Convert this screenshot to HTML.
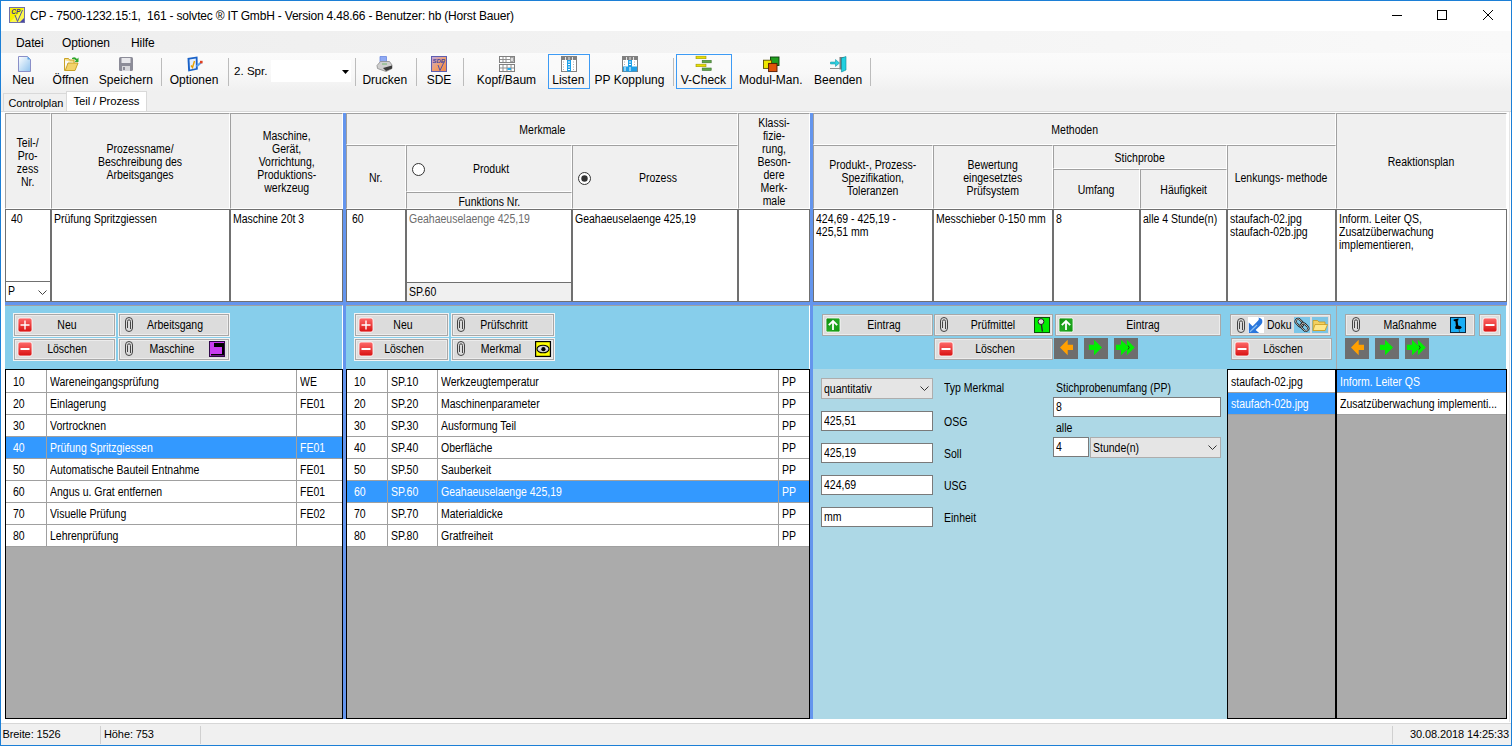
<!DOCTYPE html><html><head><meta charset="utf-8"><style>
*{margin:0;padding:0;box-sizing:border-box}
html,body{width:1512px;height:746px;overflow:hidden;background:#f0f0f0;font-family:"Liberation Sans",sans-serif;color:#000}
div{position:absolute}
.t{white-space:nowrap;font-size:12px;letter-spacing:0;line-height:13px;transform:scaleX(0.875);transform-origin:0 0}
.tc{transform-origin:50% 0}
.tu{white-space:nowrap;font-size:11px;line-height:13px}
.sx{display:inline-block;white-space:nowrap;transform:scaleX(0.875);transform-origin:50% 50%}
.sxl{display:inline-block;white-space:nowrap;transform:scaleX(0.875);transform-origin:0 0}
.tb{white-space:nowrap;font-size:12px;line-height:14px}
.h{background:#f0f0f0;border-top:1px solid #a0a0a0;border-left:1px solid #a0a0a0;border-right:1px solid #fff;border-bottom:1px solid #fff;font-size:12px;letter-spacing:0;line-height:13px;display:flex;align-items:center;justify-content:center;text-align:center;padding-top:3.5px}
.d{background:#fff;border:1px solid #707070;font-size:12px;letter-spacing:0;line-height:13px;padding:2px 0 0 2px}
.btn{background:#e1e1e1;border:1px solid #c8c8c8}
svg{position:absolute;overflow:visible}
</style></head><body>
<div style="left:0px;top:0px;width:1512px;height:31px;background:#fff"></div>
<svg style="left:9px;top:7px" width="16" height="16" viewBox="0 0 16 16"><rect x="0.5" y="0.5" width="15" height="15" fill="#f6f200" stroke="#7070a8"/>
<path d="M1 15 L15 1 L15 15 Z" fill="#fffb9a" opacity="0.5"/>
<text x="2.2" y="7" font-size="6.5" font-family="Liberation Sans" font-weight="bold" font-style="italic" fill="#3b3b8a">CP</text>
<path d="M6 8 L8.5 14.5 L13.5 3" fill="none" stroke="#5050a0" stroke-width="1"/>
<path d="M11 15 L15 11 L15 15 Z" fill="#4848a8"/></svg>
<div class="tu" style="left:30px;top:8.6px;font-size:12px;letter-spacing:-0.19px;line-height:14px">CP - 7500-1232.15:1,&nbsp; 161 - solvtec ® IT GmbH - Version 4.48.66 - Benutzer: hb (Horst Bauer)</div>
<div style="left:1392px;top:15px;width:10px;height:1px;background:#000"></div>
<div style="left:1437px;top:10px;width:10px;height:10px;border:1px solid #000"></div>
<svg style="left:1483px;top:10px" width="10" height="10" viewBox="0 0 10 10"><path d="M0 0 L10 10 M10 0 L0 10" stroke="#000" stroke-width="1"/></svg>
<div style="left:1px;top:31px;width:1510px;height:22px;background:linear-gradient(to right,#eeeeee,#f1f1f1 30%,#f9f9f9)"></div>
<div class="tu" style="left:16px;top:35.6px;font-size:12px;letter-spacing:-0.1px;line-height:14px">Datei</div>
<div class="tu" style="left:62px;top:35.6px;font-size:12px;letter-spacing:-0.1px;line-height:14px">Optionen</div>
<div class="tu" style="left:131px;top:35.6px;font-size:12px;letter-spacing:-0.1px;line-height:14px">Hilfe</div>
<div style="left:1px;top:53px;width:1510px;height:38px;background:linear-gradient(#fbfbfb,#f8f8f8 55%,#f0f0f0)"></div>
<svg width="0" height="0" style="position:absolute"><defs>
<linearGradient id="gdoc" x1="0" y1="0" x2="1" y2="1"><stop offset="0" stop-color="#fff"/><stop offset="1" stop-color="#8fc2ee"/></linearGradient>
<linearGradient id="gsde" x1="0" y1="0" x2="1" y2="1"><stop offset="0" stop-color="#b8a8e8"/><stop offset="0.5" stop-color="#f0a070"/><stop offset="1" stop-color="#f08848"/></linearGradient>
<linearGradient id="gred" x1="0" y1="0" x2="0" y2="1"><stop offset="0" stop-color="#ff6a6a"/><stop offset="1" stop-color="#d81010"/></linearGradient>
<linearGradient id="ggreen" x1="0" y1="0" x2="1" y2="1"><stop offset="0" stop-color="#0a8a0a"/><stop offset="0.5" stop-color="#22a822"/><stop offset="1" stop-color="#0c960c"/></linearGradient>
</defs></svg>
<div style="left:548px;top:54px;width:42px;height:35px;border:1px solid #3d9bf5;background:rgba(255,255,255,0.15)"></div>
<div style="left:676px;top:54px;width:56px;height:35px;border:1px solid #3d9bf5;background:rgba(255,255,255,0.15)"></div>
<div class="tb" style="left:-7.4px;width:61.1px;text-align:center;top:73.3px">Neu</div>
<svg style="left:18px;top:56px" width="16" height="16" viewBox="0 0 16 16"><path d="M0.5 0.5 H9.5 L12.5 3.5 V15.5 H0.5 Z" fill="url(#gdoc)" stroke="#8a8fc8"/><path d="M9.5 0.5 V3.5 H12.5 Z" fill="#5aa8e8"/></svg>
<div class="tb" style="left:32.6px;width:75.80000000000001px;text-align:center;top:73.3px">Öffnen</div>
<svg style="left:64px;top:56px" width="16" height="16" viewBox="0 0 16 16"><path d="M0.5 4 L0.5 14.5 L11 14.5 L14 7 L4 7 L1.5 14" fill="#f3d36a" stroke="#c9a227"/><path d="M0.5 4 L0.5 2.5 L4.5 2.5 L5.5 4 L10 4 L10 7" fill="#f7e08c" stroke="#c9a227"/><path d="M8 2 Q11 0 13 3 L14.5 1.5 L14.5 6 L10.5 6 L12 4.5 Q10.5 2.5 8 3Z" fill="#2ea82e"/></svg>
<div class="tb" style="left:80.3px;width:91.2px;text-align:center;top:73.3px">Speichern</div>
<svg style="left:118px;top:56px" width="16" height="16" viewBox="0 0 16 16"><rect x="1" y="1" width="14" height="14" rx="1.5" fill="#8c8c98"/><rect x="3.5" y="2" width="9" height="5" fill="#e8e8ec"/><rect x="4" y="10" width="8" height="5" fill="#d8d8dc"/><rect x="5" y="11" width="2" height="3" fill="#8c8c98"/></svg>
<div class="tb" style="left:149.5px;width:89.0px;text-align:center;top:73.3px">Optionen</div>
<svg style="left:187px;top:56px" width="16" height="16" viewBox="0 0 16 16"><path d="M0.5 2 L10.5 0.5 L10.8 13.5 L1.2 15.5 Z" fill="#1a62c8"/><path d="M2.5 3.6 L8.8 2.6 L8.9 12.2 L3 13.4 Z" fill="#e4f0ff"/><path d="M4 9.5 L5.5 11.5 L7.5 5" fill="none" stroke="#e8a000" stroke-width="1.4"/><path d="M9.5 10.5 L14 6.5" stroke="#5aa0ee" stroke-width="2.2"/><rect x="13" y="4.8" width="2.6" height="2.6" fill="#e04020"/></svg>
<div class="tb" style="left:343px;width:83.60000000000002px;text-align:center;top:73.3px">Drucken</div>
<svg style="left:377px;top:56px" width="16" height="16" viewBox="0 0 16 16"><path d="M3 0.5 H9.5 V6.5 H3 Z" fill="#90aaf4" stroke="#6a88e0" stroke-width="0.8"/><path d="M0 9.5 L3.5 5.5 H12.5 L15 9 V12.5 L9 15.5 L0.5 12.5 Z" fill="#cfcfcf" stroke="#8a8a8a" stroke-width="0.8"/><path d="M6 12 L15 9.5 V12.5 L9 15 Z" fill="#3a3a3a"/><path d="M5 8 H10" stroke="#5ab05a" stroke-width="0.8"/></svg>
<div class="tb" style="left:409px;width:60px;text-align:center;top:73.3px">SDE</div>
<svg style="left:431px;top:56px" width="16" height="16" viewBox="0 0 16 16"><rect x="0.5" y="0.5" width="15" height="15" fill="url(#gsde)" stroke="#5e5eb0"/><text x="1.5" y="7" font-size="6" font-family="Liberation Sans" font-style="italic" font-weight="bold" fill="#4646a0">SDE</text><path d="M7 9 L9 14.5 L14 4" fill="none" stroke="#5050a8" stroke-width="1"/></svg>
<div class="tb" style="left:456.3px;width:100.19999999999999px;text-align:center;top:73.3px">Kopf/Baum</div>
<svg style="left:499px;top:56px" width="16" height="16" viewBox="0 0 16 16"><rect x="0.5" y="0.5" width="15" height="6" fill="#fff" stroke="#808080"/><rect x="0.5" y="8.5" width="15" height="7" fill="#fff" stroke="#808080"/><path d="M1 3.5 H11 M4 1 V6 M7 1 V6 M1 12 H15 M4 9 V15 M8 9 V15 M12 9 V15" stroke="#909090"/><rect x="8.5" y="12" width="3.5" height="2" fill="#22a8e8"/><rect x="11.5" y="1.5" width="3" height="4" fill="#ddd" stroke="#888" stroke-width="0.7"/></svg>
<div class="tb" style="left:533px;width:70.60000000000002px;text-align:center;top:73.3px">Listen</div>
<svg style="left:561px;top:56px" width="16" height="16" viewBox="0 0 16 16"><rect x="0.5" y="0.5" width="15" height="15" fill="#fff" stroke="#808080"/><rect x="1" y="1" width="14" height="3" fill="#808080"/><path d="M4.5 1 V4 M8 1 V4 M11.5 1 V4" stroke="#fff" stroke-width="0.8"/><rect x="6" y="4" width="4" height="11.5" fill="#1ea0e8"/><path d="M2 6 H4 M2 8.5 H4 M2 11 H4 M2 13.5 H4 M12 6 H14 M12 8.5 H14 M12 11 H14 M12 13.5 H14" stroke="#b0b0b0" stroke-dasharray="1 1"/><path d="M7 6 H9 M7 8.5 H9 M7 11 H9 M7 13.5 H9" stroke="#fff"/></svg>
<div class="tb" style="left:575.3px;width:108.40000000000009px;text-align:center;top:73.3px">PP Kopplung</div>
<svg style="left:622px;top:56px" width="16" height="16" viewBox="0 0 16 16"><rect x="0.5" y="0.5" width="15" height="15" fill="#fff" stroke="#808080"/><rect x="1" y="1" width="14" height="3" fill="#808080"/><path d="M4.5 1 V4 M8 1 V4 M11.5 1 V4" stroke="#fff" stroke-width="0.8"/><rect x="6" y="4" width="4" height="11.5" fill="#1ea0e8"/><rect x="1" y="10.5" width="14" height="5" fill="#1ea0e8"/><path d="M2 6 H4 M2 8.5 H4 M12 6 H14 M12 8.5 H14" stroke="#b0b0b0" stroke-dasharray="1 1"/><path d="M7 6 H9 M7 8.5 H9 M2 12 H4 M2 14 H4 M7 12 H9 M7 14 H9" stroke="#fff"/></svg>
<div class="tb" style="left:661px;width:84.79999999999995px;text-align:center;top:73.3px">V-Check</div>
<svg style="left:696px;top:56px" width="16" height="16" viewBox="0 0 16 16"><rect x="0" y="0.2" width="10" height="2.5" fill="#e8e000" stroke="#a09800" stroke-width="0.6"/><rect x="6.2" y="4.3" width="9" height="2.5" fill="#5ea848" stroke="#3c7030" stroke-width="0.6"/><rect x="0" y="8.2" width="10" height="2.5" fill="#e8e000" stroke="#a09800" stroke-width="0.6"/><rect x="6.2" y="12" width="9" height="2.5" fill="#5ea848" stroke="#3c7030" stroke-width="0.6"/></svg>
<div class="tb" style="left:717.6px;width:106.39999999999998px;text-align:center;top:73.3px">Modul-Man.</div>
<svg style="left:763px;top:56px" width="16" height="16" viewBox="0 0 16 16"><rect x="7.5" y="1" width="8.5" height="8.5" fill="#20a020" stroke="#0c400c" stroke-width="0.9"/><rect x="0.5" y="4.2" width="8" height="8.2" fill="#f0e800" stroke="#5a5000" stroke-width="0.9"/><rect x="5.6" y="7.4" width="8.4" height="8.2" fill="#e05408" stroke="#501800" stroke-width="0.9"/></svg>
<div class="tb" style="left:795.8px;width:84.70000000000005px;text-align:center;top:73.3px">Beenden</div>
<svg style="left:830px;top:56px" width="16" height="16" viewBox="0 0 16 16"><path d="M9.5 1 H15 V13.5 H9.5 Z" fill="#7a7a7a"/><path d="M11.5 2 L16 0.5 V14 L11.5 16 Z" fill="#20d0e0" stroke="#0a8898" stroke-width="0.6"/><path d="M0.5 6 H5.5 V3.5 L9.5 7 L5.5 10.5 V8 H0.5 Z" fill="#30d0e0" stroke="#0a8898" stroke-width="0.5"/><path d="M0 12.5 H10" stroke="#909090" stroke-width="1"/></svg>
<div style="left:161px;top:58px;width:1px;height:28px;background:#bcbcbc"></div>
<div style="left:228px;top:58px;width:1px;height:28px;background:#bcbcbc"></div>
<div style="left:355px;top:58px;width:1px;height:28px;background:#bcbcbc"></div>
<div style="left:416px;top:58px;width:1px;height:28px;background:#bcbcbc"></div>
<div style="left:463px;top:58px;width:1px;height:28px;background:#bcbcbc"></div>
<div style="left:673px;top:58px;width:1px;height:28px;background:#bcbcbc"></div>
<div style="left:870px;top:58px;width:1px;height:28px;background:#bcbcbc"></div>
<div class="tu" style="left:234px;top:64px;font-size:11.6px;letter-spacing:0;line-height:14px">2. Spr.</div>
<div style="left:271px;top:60px;width:80px;height:22px;background:#fff"></div>
<svg style="left:342px;top:70px" width="7" height="4" viewBox="0 0 7 4"><path d="M0 0 H7 L3.5 4 Z" fill="#000"/></svg>
<div style="left:1px;top:91px;width:1510px;height:21px;background:#f0f0f0"></div>
<div style="left:3px;top:93px;width:64px;height:19px;background:#f0f0f0;border:1px solid #d9d9d9;border-bottom:none"></div>
<div style="left:66px;top:91px;width:81px;height:21px;background:#fff;border:1px solid #d9d9d9;border-bottom:none"></div>
<div class="tu" style="left:8.5px;top:96.5px;font-size:10.9px;letter-spacing:-0.1px">Controlplan</div>
<div class="tu" style="left:73.5px;top:94.5px;font-size:11.3px;letter-spacing:-0.1px">Teil / Prozess</div>
<div style="left:1px;top:111px;width:1510px;height:612px;background:#fff;border-top:1px solid #d9d9d9"></div>
<div class="h" style="left:5px;top:113px;width:46px;height:96px;"><span class="sx">Teil-/<br>Pro-<br>zess<br>Nr.</span></div>
<div class="h" style="left:51px;top:113px;width:179px;height:96px;"><span class="sx">Prozessname/<br>Beschreibung des<br>Arbeitsganges</span></div>
<div class="h" style="left:230px;top:113px;width:113px;height:96px;"><span class="sx">Maschine,<br>Gerät,<br>Vorrichtung,<br>Produktions-<br>werkzeug</span></div>
<div class="h" style="left:346px;top:113px;width:392px;height:32px;"><span class="sx">Merkmale</span></div>
<div class="h" style="left:346px;top:145px;width:60px;height:64px;"><span class="sx">Nr.</span></div>
<div class="h" style="left:406px;top:145px;width:166px;height:47px;"></div>
<div class="h" style="left:406px;top:192px;width:166px;height:17px;"><span class="sx">Funktions Nr.</span></div>
<div class="h" style="left:572px;top:145px;width:166px;height:64px;"></div>
<div class="h" style="left:738px;top:113px;width:72px;height:96px;"><span class="sx">Klassi-<br>fizie-<br>rung,<br>Beson-<br>dere<br>Merk-<br>male</span></div>
<div class="h" style="left:813px;top:113px;width:523px;height:32px;"><span class="sx">Methoden</span></div>
<div class="h" style="left:813px;top:145px;width:120px;height:64px;"><span class="sx">Produkt-, Prozess-<br>Spezifikation,<br>Toleranzen</span></div>
<div class="h" style="left:933px;top:145px;width:120px;height:64px;"><span class="sx">Bewertung<br>eingesetztes<br>Prüfsystem</span></div>
<div class="h" style="left:1053px;top:145px;width:174px;height:24px;"><span class="sx">Stichprobe</span></div>
<div class="h" style="left:1053px;top:169px;width:87px;height:40px;"><span class="sx">Umfang</span></div>
<div class="h" style="left:1140px;top:169px;width:87px;height:40px;"><span class="sx">Häufigkeit</span></div>
<div class="h" style="left:1227px;top:145px;width:109px;height:64px;"><span class="sx">Lenkungs- methode</span></div>
<div class="h" style="left:1336px;top:113px;width:171px;height:96px;"><span class="sx">Reaktionsplan</span></div>
<svg style="left:412px;top:163px" width="13" height="13" viewBox="0 0 13 13"><circle cx="6.5" cy="6.5" r="6" fill="#fff" stroke="#333"/></svg>
<div class="t" style="left:473px;top:163px;">Produkt</div>
<svg style="left:578px;top:172px" width="13" height="13" viewBox="0 0 13 13"><circle cx="6.5" cy="6.5" r="6" fill="#fff" stroke="#333"/><circle cx="6.5" cy="6.5" r="3.2" fill="#333"/></svg>
<div class="t" style="left:639px;top:172px;">Prozess</div>
<div class="d" style="left:5px;top:209px;width:46px;height:73px;padding-left:5px;padding-top:3px"><span class="sxl">40</span></div>
<div style="left:5px;top:282px;width:46px;height:20px;background:#fff;border:1px solid #707070;border-top:none"></div>
<div class="t" style="left:8px;top:284.6px;">P</div>
<svg style="left:38px;top:289.5px" width="9" height="5" viewBox="0 0 9 5"><path d="M0.5 0.5 L4.5 4.5 L8.5 0.5" fill="none" stroke="#444" stroke-width="1"/></svg>
<div class="d" style="left:51px;top:209px;width:179px;height:93px;padding-top:3px"><span class="sxl">Prüfung Spritzgiessen</span></div>
<div class="d" style="left:230px;top:209px;width:113px;height:93px;padding-top:3px"><span class="sxl">Maschine 20t 3</span></div>
<div class="d" style="left:346px;top:209px;width:60px;height:93px;padding-left:5px;padding-top:3px"><span class="sxl">60</span></div>
<div class="d" style="left:406px;top:209px;width:166px;height:93px;padding-top:3px;color:#6d6d6d"><span class="sxl">Geahaeuselaenge 425,19</span></div>
<div style="left:406px;top:282px;width:166px;height:20px;background:#f0f0f0;border:1px solid #707070"></div>
<div class="t" style="left:409px;top:286px;">SP.60</div>
<div class="d" style="left:572px;top:209px;width:166px;height:93px;padding-top:3px"><span class="sxl">Geahaeuselaenge 425,19</span></div>
<div class="d" style="left:738px;top:209px;width:72px;height:93px;"></div>
<div class="d" style="left:813px;top:209px;width:120px;height:93px;padding-top:3px"><span class="sxl">424,69 - 425,19 -<br>425,51 mm</span></div>
<div class="d" style="left:933px;top:209px;width:120px;height:93px;padding-top:3px"><span class="sxl">Messchieber 0-150 mm</span></div>
<div class="d" style="left:1053px;top:209px;width:87px;height:93px;padding-top:3px"><span class="sxl">8</span></div>
<div class="d" style="left:1140px;top:209px;width:87px;height:93px;padding-top:3px"><span class="sxl">alle 4 Stunde(n)</span></div>
<div class="d" style="left:1227px;top:209px;width:109px;height:93px;padding-top:3px"><span class="sxl">staufach-02.jpg<br>staufach-02b.jpg</span></div>
<div class="d" style="left:1336px;top:209px;width:171px;height:93px;padding-top:3px"><span class="sxl">Inform. Leiter QS,<br>Zusatzüberwachung<br>implementieren,</span></div>
<div style="left:343px;top:113px;width:3px;height:606px;background:#6495ed"></div>
<div style="left:810px;top:113px;width:3px;height:606px;background:#6495ed"></div>
<div style="left:5px;top:302px;width:1502px;height:3px;background:#6495ed"></div>
<div style="left:5px;top:305px;width:338px;height:64px;background:#87ceeb;border-top:1px solid #a0a0a0;border-right:1px solid #fff"></div>
<div style="left:346px;top:305px;width:464px;height:64px;background:#87ceeb;border-top:1px solid #a0a0a0;border-right:1px solid #fff"></div>
<div style="left:813px;top:305px;width:523px;height:64px;background:#87ceeb;border-top:1px solid #a0a0a0"></div>
<div style="left:813px;top:369px;width:414px;height:350px;background:#add8e6"></div>
<div style="left:1336px;top:305px;width:171px;height:64px;background:#87ceeb;border-top:1px solid #a0a0a0;border-left:1px solid #a8a8a8;border-right:1px solid #fff"></div>
<div style="left:13px;top:313px;width:103px;height:24px;background:#dcdcdc;border:1px solid #f4f4f4;box-shadow:inset 0 0 0 1px #a8a8a8,inset 0 0 0 2px #ececec"></div>
<div class="t tc" style="left:-83px;width:300px;text-align:center;top:319px;">Neu</div>
<svg style="left:18px;top:318px" width="14" height="14" viewBox="0 0 14 14"><rect x="0" y="0" width="14" height="14" rx="2" fill="url(#gred)" stroke="#fff" stroke-width="0.8"/><path d="M7 2.5 V11.5 M2.5 7 H11.5" stroke="#fff" stroke-width="1.4"/></svg>
<div style="left:13px;top:338px;width:103px;height:23px;background:#dcdcdc;border:1px solid #f4f4f4;box-shadow:inset 0 0 0 1px #a8a8a8,inset 0 0 0 2px #ececec"></div>
<div class="t tc" style="left:-83px;width:300px;text-align:center;top:342.6px;">Löschen</div>
<svg style="left:18px;top:342px" width="14" height="14" viewBox="0 0 14 14"><rect x="0" y="0" width="14" height="14" rx="2" fill="url(#gred)" stroke="#fff" stroke-width="0.8"/><path d="M2.5 7 H11.5" stroke="#fff" stroke-width="2"/></svg>
<div style="left:118px;top:313px;width:112px;height:24px;background:#dcdcdc;border:1px solid #f4f4f4;box-shadow:inset 0 0 0 1px #a8a8a8,inset 0 0 0 2px #ececec"></div>
<div class="t tc" style="left:25px;width:300px;text-align:center;top:319px;">Arbeitsgang</div>
<svg style="left:125px;top:317px" width="8" height="15" viewBox="0 0 8 15"><rect x="0.5" y="0.5" width="7" height="14" rx="3.5" fill="none" stroke="#444" stroke-width="1"/><path d="M2.5 11 V4.5 Q2.5 2.8 4 2.8 Q5.5 2.8 5.5 4.5 V12" fill="none" stroke="#444" stroke-width="1"/></svg>
<div style="left:118px;top:338px;width:112px;height:23px;background:#dcdcdc;border:1px solid #f4f4f4;box-shadow:inset 0 0 0 1px #a8a8a8,inset 0 0 0 2px #ececec"></div>
<div class="t tc" style="left:22px;width:300px;text-align:center;top:342.6px;">Maschine</div>
<svg style="left:125px;top:341px" width="8" height="15" viewBox="0 0 8 15"><rect x="0.5" y="0.5" width="7" height="14" rx="3.5" fill="none" stroke="#444" stroke-width="1"/><path d="M2.5 11 V4.5 Q2.5 2.8 4 2.8 Q5.5 2.8 5.5 4.5 V12" fill="none" stroke="#444" stroke-width="1"/></svg>
<svg style="left:209px;top:341px" width="16" height="16" viewBox="0 0 16 16"><rect x="0.5" y="0.5" width="15" height="15" fill="#c83cf0" stroke="#30084a"/><path d="M5 2 H15 V14 H13 V6 H5 Z" fill="#000"/><path d="M2 13 H15 V14.5 H2 Z" fill="#000"/></svg>
<div style="left:354px;top:313px;width:95px;height:24px;background:#dcdcdc;border:1px solid #f4f4f4;box-shadow:inset 0 0 0 1px #a8a8a8,inset 0 0 0 2px #ececec"></div>
<div class="t tc" style="left:253px;width:300px;text-align:center;top:319px;">Neu</div>
<svg style="left:359px;top:318px" width="14" height="14" viewBox="0 0 14 14"><rect x="0" y="0" width="14" height="14" rx="2" fill="url(#gred)" stroke="#fff" stroke-width="0.8"/><path d="M7 2.5 V11.5 M2.5 7 H11.5" stroke="#fff" stroke-width="1.4"/></svg>
<div style="left:354px;top:338px;width:95px;height:23px;background:#dcdcdc;border:1px solid #f4f4f4;box-shadow:inset 0 0 0 1px #a8a8a8,inset 0 0 0 2px #ececec"></div>
<div class="t tc" style="left:254.3px;width:300px;text-align:center;top:342.6px;">Löschen</div>
<svg style="left:359px;top:342px" width="14" height="14" viewBox="0 0 14 14"><rect x="0" y="0" width="14" height="14" rx="2" fill="url(#gred)" stroke="#fff" stroke-width="0.8"/><path d="M2.5 7 H11.5" stroke="#fff" stroke-width="2"/></svg>
<div style="left:451px;top:313px;width:104px;height:24px;background:#dcdcdc;border:1px solid #f4f4f4;box-shadow:inset 0 0 0 1px #a8a8a8,inset 0 0 0 2px #ececec"></div>
<div class="t tc" style="left:354px;width:300px;text-align:center;top:319px;">Prüfschritt</div>
<svg style="left:457px;top:317px" width="8" height="15" viewBox="0 0 8 15"><rect x="0.5" y="0.5" width="7" height="14" rx="3.5" fill="none" stroke="#444" stroke-width="1"/><path d="M2.5 11 V4.5 Q2.5 2.8 4 2.8 Q5.5 2.8 5.5 4.5 V12" fill="none" stroke="#444" stroke-width="1"/></svg>
<div style="left:451px;top:338px;width:104px;height:23px;background:#dcdcdc;border:1px solid #f4f4f4;box-shadow:inset 0 0 0 1px #a8a8a8,inset 0 0 0 2px #ececec"></div>
<div class="t tc" style="left:351px;width:300px;text-align:center;top:342.6px;">Merkmal</div>
<svg style="left:457px;top:341px" width="8" height="15" viewBox="0 0 8 15"><rect x="0.5" y="0.5" width="7" height="14" rx="3.5" fill="none" stroke="#444" stroke-width="1"/><path d="M2.5 11 V4.5 Q2.5 2.8 4 2.8 Q5.5 2.8 5.5 4.5 V12" fill="none" stroke="#444" stroke-width="1"/></svg>
<svg style="left:535px;top:341px" width="16" height="16" viewBox="0 0 16 16"><rect x="0.6" y="0.6" width="14.8" height="14.8" fill="#ffff00" stroke="#000" stroke-width="1.2"/><ellipse cx="8" cy="8" rx="6" ry="3.8" fill="#d0d0d0" stroke="#000" stroke-width="1.1"/><circle cx="8.4" cy="8.2" r="2.1" fill="#000"/><path d="M3.5 8 L5.5 6.5 M12.5 8 L11 6.5" stroke="#fff" stroke-width="0.8"/></svg>
<div style="left:822px;top:314px;width:111px;height:22px;background:#dcdcdc;border:1px solid #a8a8a8;box-shadow:inset 0 0 0 1px #ececec"></div>
<div class="t tc" style="left:734.3px;width:300px;text-align:center;top:319px;">Eintrag</div>
<svg style="left:826px;top:318px" width="14" height="14" viewBox="0 0 14 14"><rect x="0" y="0" width="14" height="14" rx="1.5" fill="url(#ggreen)" stroke="#fff" stroke-width="0.8"/><path d="M7 12 V3 M2.8 7.2 L7 3 L11.2 7.2" fill="none" stroke="#fff" stroke-width="1.8"/></svg>
<div style="left:934px;top:314px;width:119px;height:22px;background:#dcdcdc;border:1px solid #a8a8a8;box-shadow:inset 0 0 0 1px #ececec"></div>
<div class="t tc" style="left:842.5px;width:300px;text-align:center;top:319px;">Prüfmittel</div>
<svg style="left:940px;top:317px" width="8" height="15" viewBox="0 0 8 15"><rect x="0.5" y="0.5" width="7" height="14" rx="3.5" fill="none" stroke="#444" stroke-width="1"/><path d="M2.5 11 V4.5 Q2.5 2.8 4 2.8 Q5.5 2.8 5.5 4.5 V12" fill="none" stroke="#444" stroke-width="1"/></svg>
<svg style="left:1034px;top:317px" width="16" height="16" viewBox="0 0 16 16"><rect x="0.5" y="0.5" width="15" height="15" fill="#00ee00" stroke="#0a500a" stroke-width="1"/><circle cx="7" cy="4.6" r="2.9" fill="#d8d8d8" stroke="#2a1a2a" stroke-width="1"/><path d="M7.4 7.5 L8.4 14.5" stroke="#2a1a2a" stroke-width="1.3"/></svg>
<div style="left:1055px;top:314px;width:166px;height:22px;background:#dcdcdc;border:1px solid #a8a8a8;box-shadow:inset 0 0 0 1px #ececec"></div>
<div class="t tc" style="left:993.4000000000001px;width:300px;text-align:center;top:319px;">Eintrag</div>
<svg style="left:1059px;top:318px" width="14" height="14" viewBox="0 0 14 14"><rect x="0" y="0" width="14" height="14" rx="1.5" fill="url(#ggreen)" stroke="#fff" stroke-width="0.8"/><path d="M7 12 V3 M2.8 7.2 L7 3 L11.2 7.2" fill="none" stroke="#fff" stroke-width="1.8"/></svg>
<div style="left:934px;top:338px;width:119px;height:22px;background:#dcdcdc;border:1px solid #a8a8a8;box-shadow:inset 0 0 0 1px #ececec"></div>
<div class="t tc" style="left:845px;width:300px;text-align:center;top:342.6px;">Löschen</div>
<svg style="left:939px;top:342px" width="14" height="14" viewBox="0 0 14 14"><rect x="0" y="0" width="14" height="14" rx="2" fill="url(#gred)" stroke="#fff" stroke-width="0.8"/><path d="M2.5 7 H11.5" stroke="#fff" stroke-width="2"/></svg>
<svg style="left:1054px;top:338px" width="24" height="22" viewBox="0 0 24 22"><rect x="0" y="0" width="24" height="21" fill="#6e6e6e"/><path d="M6 9.5 L13.7 1.7 V6.7 H19 V12.1 H13.7 V17.2 Z" fill="#ffa000"/></svg>
<svg style="left:1084px;top:338px" width="24" height="22" viewBox="0 0 24 22"><rect x="0" y="0" width="24" height="21" fill="#6e6e6e"/><path d="M4.9 6.7 H10 V1.7 L18 9.5 L10 17.2 V12.1 H4.9 Z" fill="#00f000"/></svg>
<svg style="left:1114px;top:338px" width="24" height="22" viewBox="0 0 24 22"><rect x="0" y="0" width="24" height="21" fill="#6e6e6e"/><path d="M1.9 6.7 H7 V1.7 L15 9.5 L7 17.2 V12.1 H1.9 Z M12.9 1.7 L20.7 9.5 L12.9 17.2 Z" fill="#00f000"/><path d="M14 7.5 L15.2 9.5 L14 11.5" stroke="#203020" stroke-width="0.8" fill="none"/></svg>
<div style="left:1230px;top:314px;width:101px;height:22px;background:#dcdcdc;border:1px solid #a8a8a8;box-shadow:inset 0 0 0 1px #ececec"></div>
<svg style="left:1237px;top:318px" width="8" height="15" viewBox="0 0 8 15"><rect x="0.5" y="0.5" width="7" height="14" rx="3.5" fill="none" stroke="#444" stroke-width="1"/><path d="M2.5 11 V4.5 Q2.5 2.8 4 2.8 Q5.5 2.8 5.5 4.5 V12" fill="none" stroke="#444" stroke-width="1"/></svg>
<svg style="left:1248px;top:317px" width="16" height="16" viewBox="0 0 16 16"><rect x="0" y="0" width="16" height="16" fill="#fff"/><path d="M0.8 5.5 L4.6 9.3 L10.2 3.6 Q11.6 2 10.4 0.6 Q15.2 1.4 14.2 5.8 Q13.6 7.4 12 8.8 L7.6 12.9 L11.2 16 H0.8 Z" fill="#2a76dc"/><path d="M2 14.8 L9 8" stroke="#8cc0f0" stroke-width="1.2"/></svg>
<div class="t" style="left:1267px;top:318.5px;">Doku</div>
<svg style="left:1294px;top:317px" width="16" height="16" viewBox="0 0 16 16"><rect x="0" y="0" width="16" height="16" fill="#7cc6e8"/><g transform="rotate(-45 8 8)"><rect x="5.3" y="0.2" width="5" height="8.6" rx="2.5" fill="none" stroke="#111" stroke-width="2"/><rect x="5.3" y="0.2" width="5" height="8.6" rx="2.5" fill="none" stroke="#fff" stroke-width="0.7"/><rect x="5.8" y="7" width="5" height="8.6" rx="2.5" fill="none" stroke="#111" stroke-width="2"/><rect x="5.8" y="7" width="5" height="8.6" rx="2.5" fill="none" stroke="#fff" stroke-width="0.7"/></g></svg>
<svg style="left:1312px;top:317px" width="16" height="16" viewBox="0 0 16 16"><rect x="0" y="0" width="16" height="16" fill="#7cc4e4"/><path d="M1 3.5 H5.5 L7 5 H13 V13.5 H1 Z" fill="#f2d060" stroke="#c89a20" stroke-width="0.8"/><path d="M3 7.5 H15.5 L13 13.5 H1 Z" fill="#ffe88a" stroke="#c89a20" stroke-width="0.8"/></svg>
<div style="left:1231px;top:338px;width:101px;height:22px;background:#dcdcdc;border:1px solid #a8a8a8;box-shadow:inset 0 0 0 1px #ececec"></div>
<div class="t tc" style="left:1133px;width:300px;text-align:center;top:342.6px;">Löschen</div>
<svg style="left:1235px;top:342px" width="14" height="14" viewBox="0 0 14 14"><rect x="0" y="0" width="14" height="14" rx="2" fill="url(#gred)" stroke="#fff" stroke-width="0.8"/><path d="M2.5 7 H11.5" stroke="#fff" stroke-width="2"/></svg>
<div style="left:1345px;top:314px;width:130px;height:22px;background:#dcdcdc;border:1px solid #a8a8a8;box-shadow:inset 0 0 0 1px #ececec"></div>
<div class="t tc" style="left:1259.5px;width:300px;text-align:center;top:319px;">Maßnahme</div>
<svg style="left:1352px;top:317px" width="8" height="15" viewBox="0 0 8 15"><rect x="0.5" y="0.5" width="7" height="14" rx="3.5" fill="none" stroke="#444" stroke-width="1"/><path d="M2.5 11 V4.5 Q2.5 2.8 4 2.8 Q5.5 2.8 5.5 4.5 V12" fill="none" stroke="#444" stroke-width="1"/></svg>
<svg style="left:1450px;top:317px" width="16" height="16" viewBox="0 0 16 16"><rect x="0.5" y="0.5" width="15" height="15" fill="#1aaef6" stroke="#0a2a40" stroke-width="1"/><path d="M3.6 2.6 L8.6 1.6 L8.2 3.4 L7.6 3.6 L8.2 8.4 Q11.6 9 11.8 10.6 L10.6 11.8 Q7.4 12.4 5.2 11.4 Q5 9.6 5.9 8.8 L5.4 4.2 L3.8 4 Z" fill="#000"/><path d="M9 12 L9.5 15" stroke="#444" stroke-width="0.8"/></svg>
<div style="left:1479px;top:314px;width:22px;height:22px;background:#dcdcdc;border:1px solid #a8a8a8;box-shadow:inset 0 0 0 1px #ececec"></div>
<svg style="left:1483px;top:318px" width="14" height="14" viewBox="0 0 14 14"><rect x="0" y="0" width="14" height="14" rx="2" fill="url(#gred)" stroke="#fff" stroke-width="0.8"/><path d="M2.5 7 H11.5" stroke="#fff" stroke-width="2"/></svg>
<svg style="left:1345px;top:338px" width="24" height="21" viewBox="0 0 24 21"><rect x="0" y="0" width="24" height="21" fill="#6e6e6e"/><path d="M6 9.5 L13.7 1.7 V6.7 H19 V12.1 H13.7 V17.2 Z" fill="#ffa000"/></svg>
<svg style="left:1375px;top:338px" width="24" height="21" viewBox="0 0 24 21"><rect x="0" y="0" width="24" height="21" fill="#6e6e6e"/><path d="M4.9 6.7 H10 V1.7 L18 9.5 L10 17.2 V12.1 H4.9 Z" fill="#00f000"/></svg>
<svg style="left:1405px;top:338px" width="24" height="21" viewBox="0 0 24 21"><rect x="0" y="0" width="24" height="21" fill="#6e6e6e"/><path d="M1.9 6.7 H7 V1.7 L15 9.5 L7 17.2 V12.1 H1.9 Z M12.9 1.7 L20.7 9.5 L12.9 17.2 Z" fill="#00f000"/><path d="M14 7.5 L15.2 9.5 L14 11.5" stroke="#203020" stroke-width="0.8" fill="none"/></svg>
<div style="left:5px;top:369px;width:338px;height:350px;background:#ababab;border:1px solid #000;"></div>
<div style="left:6px;top:370px;width:336px;height:23px;background:#fff;border-bottom:1px solid #a0a0a0"></div>
<div class="t" style="left:13px;top:375.6px;color:#000">10</div>
<div style="left:46px;top:370px;width:1px;height:23px;background:#a0a0a0"></div>
<div class="t" style="left:50px;top:375.6px;color:#000">Wareneingangsprüfung</div>
<div style="left:296px;top:370px;width:1px;height:23px;background:#a0a0a0"></div>
<div class="t" style="left:300px;top:375.6px;color:#000">WE</div>
<div style="left:6px;top:393px;width:336px;height:22px;background:#fff;border-bottom:1px solid #a0a0a0"></div>
<div class="t" style="left:13px;top:397.6px;color:#000">20</div>
<div style="left:46px;top:393px;width:1px;height:22px;background:#a0a0a0"></div>
<div class="t" style="left:50px;top:397.6px;color:#000">Einlagerung</div>
<div style="left:296px;top:393px;width:1px;height:22px;background:#a0a0a0"></div>
<div class="t" style="left:300px;top:397.6px;color:#000">FE01</div>
<div style="left:6px;top:415px;width:336px;height:22px;background:#fff;border-bottom:1px solid #a0a0a0"></div>
<div class="t" style="left:13px;top:419.6px;color:#000">30</div>
<div style="left:46px;top:415px;width:1px;height:22px;background:#a0a0a0"></div>
<div class="t" style="left:50px;top:419.6px;color:#000">Vortrocknen</div>
<div style="left:296px;top:415px;width:1px;height:22px;background:#a0a0a0"></div>
<div class="t" style="left:300px;top:419.6px;color:#000"></div>
<div style="left:6px;top:437px;width:336px;height:22px;background:#3399ff;border-bottom:1px solid #a0a0a0"></div>
<div class="t" style="left:13px;top:441.6px;color:#fff">40</div>
<div style="left:46px;top:437px;width:1px;height:22px;background:#a0a0a0"></div>
<div class="t" style="left:50px;top:441.6px;color:#fff">Prüfung Spritzgiessen</div>
<div style="left:296px;top:437px;width:1px;height:22px;background:#a0a0a0"></div>
<div class="t" style="left:300px;top:441.6px;color:#fff">FE01</div>
<div style="left:6px;top:459px;width:336px;height:22px;background:#fff;border-bottom:1px solid #a0a0a0"></div>
<div class="t" style="left:13px;top:463.6px;color:#000">50</div>
<div style="left:46px;top:459px;width:1px;height:22px;background:#a0a0a0"></div>
<div class="t" style="left:50px;top:463.6px;color:#000">Automatische Bauteil Entnahme</div>
<div style="left:296px;top:459px;width:1px;height:22px;background:#a0a0a0"></div>
<div class="t" style="left:300px;top:463.6px;color:#000">FE01</div>
<div style="left:6px;top:481px;width:336px;height:22px;background:#fff;border-bottom:1px solid #a0a0a0"></div>
<div class="t" style="left:13px;top:485.6px;color:#000">60</div>
<div style="left:46px;top:481px;width:1px;height:22px;background:#a0a0a0"></div>
<div class="t" style="left:50px;top:485.6px;color:#000">Angus u. Grat entfernen</div>
<div style="left:296px;top:481px;width:1px;height:22px;background:#a0a0a0"></div>
<div class="t" style="left:300px;top:485.6px;color:#000">FE01</div>
<div style="left:6px;top:503px;width:336px;height:22px;background:#fff;border-bottom:1px solid #a0a0a0"></div>
<div class="t" style="left:13px;top:507.6px;color:#000">70</div>
<div style="left:46px;top:503px;width:1px;height:22px;background:#a0a0a0"></div>
<div class="t" style="left:50px;top:507.6px;color:#000">Visuelle Prüfung</div>
<div style="left:296px;top:503px;width:1px;height:22px;background:#a0a0a0"></div>
<div class="t" style="left:300px;top:507.6px;color:#000">FE02</div>
<div style="left:6px;top:525px;width:336px;height:22px;background:#fff;border-bottom:1px solid #a0a0a0"></div>
<div class="t" style="left:13px;top:529.6px;color:#000">80</div>
<div style="left:46px;top:525px;width:1px;height:22px;background:#a0a0a0"></div>
<div class="t" style="left:50px;top:529.6px;color:#000">Lehrenprüfung</div>
<div style="left:296px;top:525px;width:1px;height:22px;background:#a0a0a0"></div>
<div class="t" style="left:300px;top:529.6px;color:#000"></div>
<div style="left:346px;top:369px;width:464px;height:350px;background:#ababab;border:1px solid #000;"></div>
<div style="left:347px;top:370px;width:462px;height:23px;background:#fff;border-bottom:1px solid #a0a0a0"></div>
<div class="t" style="left:354px;top:375.6px;color:#000">10</div>
<div style="left:387px;top:370px;width:1px;height:23px;background:#a0a0a0"></div>
<div class="t" style="left:391px;top:375.6px;color:#000">SP.10</div>
<div style="left:437px;top:370px;width:1px;height:23px;background:#a0a0a0"></div>
<div class="t" style="left:441px;top:375.6px;color:#000">Werkzeugtemperatur</div>
<div style="left:778px;top:370px;width:1px;height:23px;background:#a0a0a0"></div>
<div class="t" style="left:782px;top:375.6px;color:#000">PP</div>
<div style="left:347px;top:393px;width:462px;height:22px;background:#fff;border-bottom:1px solid #a0a0a0"></div>
<div class="t" style="left:354px;top:397.6px;color:#000">20</div>
<div style="left:387px;top:393px;width:1px;height:22px;background:#a0a0a0"></div>
<div class="t" style="left:391px;top:397.6px;color:#000">SP.20</div>
<div style="left:437px;top:393px;width:1px;height:22px;background:#a0a0a0"></div>
<div class="t" style="left:441px;top:397.6px;color:#000">Maschinenparameter</div>
<div style="left:778px;top:393px;width:1px;height:22px;background:#a0a0a0"></div>
<div class="t" style="left:782px;top:397.6px;color:#000">PP</div>
<div style="left:347px;top:415px;width:462px;height:22px;background:#fff;border-bottom:1px solid #a0a0a0"></div>
<div class="t" style="left:354px;top:419.6px;color:#000">30</div>
<div style="left:387px;top:415px;width:1px;height:22px;background:#a0a0a0"></div>
<div class="t" style="left:391px;top:419.6px;color:#000">SP.30</div>
<div style="left:437px;top:415px;width:1px;height:22px;background:#a0a0a0"></div>
<div class="t" style="left:441px;top:419.6px;color:#000">Ausformung Teil</div>
<div style="left:778px;top:415px;width:1px;height:22px;background:#a0a0a0"></div>
<div class="t" style="left:782px;top:419.6px;color:#000">PP</div>
<div style="left:347px;top:437px;width:462px;height:22px;background:#fff;border-bottom:1px solid #a0a0a0"></div>
<div class="t" style="left:354px;top:441.6px;color:#000">40</div>
<div style="left:387px;top:437px;width:1px;height:22px;background:#a0a0a0"></div>
<div class="t" style="left:391px;top:441.6px;color:#000">SP.40</div>
<div style="left:437px;top:437px;width:1px;height:22px;background:#a0a0a0"></div>
<div class="t" style="left:441px;top:441.6px;color:#000">Oberfläche</div>
<div style="left:778px;top:437px;width:1px;height:22px;background:#a0a0a0"></div>
<div class="t" style="left:782px;top:441.6px;color:#000">PP</div>
<div style="left:347px;top:459px;width:462px;height:22px;background:#fff;border-bottom:1px solid #a0a0a0"></div>
<div class="t" style="left:354px;top:463.6px;color:#000">50</div>
<div style="left:387px;top:459px;width:1px;height:22px;background:#a0a0a0"></div>
<div class="t" style="left:391px;top:463.6px;color:#000">SP.50</div>
<div style="left:437px;top:459px;width:1px;height:22px;background:#a0a0a0"></div>
<div class="t" style="left:441px;top:463.6px;color:#000">Sauberkeit</div>
<div style="left:778px;top:459px;width:1px;height:22px;background:#a0a0a0"></div>
<div class="t" style="left:782px;top:463.6px;color:#000">PP</div>
<div style="left:347px;top:481px;width:462px;height:22px;background:#3399ff;border-bottom:1px solid #a0a0a0"></div>
<div class="t" style="left:354px;top:485.6px;color:#fff">60</div>
<div style="left:387px;top:481px;width:1px;height:22px;background:#a0a0a0"></div>
<div class="t" style="left:391px;top:485.6px;color:#fff">SP.60</div>
<div style="left:437px;top:481px;width:1px;height:22px;background:#a0a0a0"></div>
<div class="t" style="left:441px;top:485.6px;color:#fff">Geahaeuselaenge 425,19</div>
<div style="left:778px;top:481px;width:1px;height:22px;background:#a0a0a0"></div>
<div class="t" style="left:782px;top:485.6px;color:#fff">PP</div>
<div style="left:347px;top:503px;width:462px;height:22px;background:#fff;border-bottom:1px solid #a0a0a0"></div>
<div class="t" style="left:354px;top:507.6px;color:#000">70</div>
<div style="left:387px;top:503px;width:1px;height:22px;background:#a0a0a0"></div>
<div class="t" style="left:391px;top:507.6px;color:#000">SP.70</div>
<div style="left:437px;top:503px;width:1px;height:22px;background:#a0a0a0"></div>
<div class="t" style="left:441px;top:507.6px;color:#000">Materialdicke</div>
<div style="left:778px;top:503px;width:1px;height:22px;background:#a0a0a0"></div>
<div class="t" style="left:782px;top:507.6px;color:#000">PP</div>
<div style="left:347px;top:525px;width:462px;height:22px;background:#fff;border-bottom:1px solid #a0a0a0"></div>
<div class="t" style="left:354px;top:529.6px;color:#000">80</div>
<div style="left:387px;top:525px;width:1px;height:22px;background:#a0a0a0"></div>
<div class="t" style="left:391px;top:529.6px;color:#000">SP.80</div>
<div style="left:437px;top:525px;width:1px;height:22px;background:#a0a0a0"></div>
<div class="t" style="left:441px;top:529.6px;color:#000">Gratfreiheit</div>
<div style="left:778px;top:525px;width:1px;height:22px;background:#a0a0a0"></div>
<div class="t" style="left:782px;top:529.6px;color:#000">PP</div>
<div style="left:1227px;top:369px;width:109px;height:350px;background:#ababab;border:1px solid #000;"></div>
<div style="left:1228px;top:370px;width:107px;height:23px;background:#fff;border-bottom:1px solid #a0a0a0"></div>
<div class="t" style="left:1231px;top:375.6px;color:#000">staufach-02.jpg</div>
<div style="left:1228px;top:393px;width:107px;height:22px;background:#3399ff;border-bottom:1px solid #a0a0a0"></div>
<div class="t" style="left:1231px;top:397.6px;color:#fff">staufach-02b.jpg</div>
<div style="left:1336px;top:369px;width:171px;height:350px;background:#ababab;border:1px solid #000;"></div>
<div style="left:1337px;top:370px;width:169px;height:23px;background:#3399ff;border-bottom:1px solid #a0a0a0"></div>
<div class="t" style="left:1340px;top:375.6px;color:#fff">Inform. Leiter QS</div>
<div style="left:1337px;top:393px;width:169px;height:22px;background:#fff;border-bottom:1px solid #a0a0a0"></div>
<div class="t" style="left:1340px;top:397.6px;color:#000">Zusatzüberwachung implementi...</div>
<div style="left:821px;top:378px;width:112px;height:21px;background:#e5e5e5;border:1px solid #adadad"></div>
<div class="t" style="left:824px;top:383px;">quantitativ</div>
<svg style="left:920px;top:386px" width="9" height="5" viewBox="0 0 9 5"><path d="M0.5 0.5 L4.5 4.5 L8.5 0.5" fill="none" stroke="#333" stroke-width="1"/></svg>
<div class="t" style="left:944px;top:382px;">Typ Merkmal</div>
<div style="left:821px;top:411px;width:112px;height:20px;background:#fff;border:1px solid #7a7a7a"></div>
<div class="t" style="left:824px;top:415px;">425,51</div>
<div class="t" style="left:944px;top:415.6px;">OSG</div>
<div style="left:821px;top:443px;width:112px;height:20px;background:#fff;border:1px solid #7a7a7a"></div>
<div class="t" style="left:824px;top:447px;">425,19</div>
<div class="t" style="left:944px;top:447.6px;">Soll</div>
<div style="left:821px;top:475px;width:112px;height:20px;background:#fff;border:1px solid #7a7a7a"></div>
<div class="t" style="left:824px;top:479px;">424,69</div>
<div class="t" style="left:944px;top:479.6px;">USG</div>
<div style="left:821px;top:507px;width:112px;height:20px;background:#fff;border:1px solid #7a7a7a"></div>
<div class="t" style="left:824px;top:511px;">mm</div>
<div class="t" style="left:944px;top:511.6px;">Einheit</div>
<div class="t" style="left:1056px;top:382px;">Stichprobenumfang (PP)</div>
<div style="left:1053px;top:397px;width:168px;height:20px;background:#fff;border:1px solid #7a7a7a"></div>
<div class="t" style="left:1056px;top:401px;">8</div>
<div class="t" style="left:1056px;top:422px;">alle</div>
<div style="left:1053px;top:437px;width:36px;height:20px;background:#fff;border:1px solid #7a7a7a"></div>
<div class="t" style="left:1056px;top:441px;">4</div>
<div style="left:1090px;top:437px;width:131px;height:21px;background:#e5e5e5;border:1px solid #adadad"></div>
<div class="t" style="left:1093px;top:442px;">Stunde(n)</div>
<svg style="left:1207.5px;top:445px" width="9" height="5" viewBox="0 0 9 5"><path d="M0.5 0.5 L4.5 4.5 L8.5 0.5" fill="none" stroke="#333" stroke-width="1"/></svg>
<div style="left:1px;top:719px;width:1510px;height:4px;background:#fff"></div>
<div style="left:1px;top:723px;width:1510px;height:22px;background:#f0f0f0;border-top:1px solid #d7d7d7"></div>
<div class="tu" style="left:2.5px;top:728.3px;font-size:11px;letter-spacing:-0.1px">Breite: 1526</div>
<div class="tu" style="left:104px;top:728.3px;font-size:11px;letter-spacing:-0.1px">Höhe: 753</div>
<div style="left:100px;top:726px;width:1px;height:18px;background:#d0d0d0"></div>
<div style="left:200px;top:726px;width:1px;height:18px;background:#d0d0d0"></div>
<div style="left:1392px;top:726px;width:1px;height:18px;background:#d0d0d0"></div>
<div class="tu" style="right:3px;top:728.3px;font-size:11px;letter-spacing:-0.1px">30.08.2018 14:25:33</div>
<div style="left:1509px;top:112px;width:1px;height:610px;background:#e4e4e4"></div>
<div style="left:0px;top:0px;width:1512px;height:1px;background:#1c7fd6"></div>
<div style="left:0px;top:0px;width:1px;height:746px;background:#1c7fd6"></div>
<div style="left:1511px;top:0px;width:1px;height:746px;background:#1c7fd6"></div>
<div style="left:0px;top:745px;width:1512px;height:1px;background:#1c7fd6"></div>
</body></html>
